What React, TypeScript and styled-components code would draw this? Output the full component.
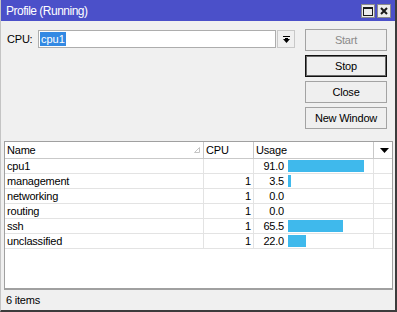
import styled, { createGlobalStyle } from 'styled-components';

const GlobalStyle = createGlobalStyle`
  html, body {
    margin: 0;
    padding: 0;
    background: #f0f0f0;
  }
  body {
    font-family: "Liberation Sans", Arial, sans-serif;
    font-size: 11px;
    color: #000;
  }
`;

const Window = styled.div`
  width: 397px;
  height: 312px;
  box-sizing: border-box;
  display: flex;
  flex-direction: column;
  background: #f0f0f0;
  border-left: 1px solid #c4c4c4;
  border-right: 2px solid #3c3c3c;
  border-bottom: 2px solid #3c3c3c;
`;

const TitleBar = styled.div`
  height: 21px;
  flex: none;
  display: flex;
  align-items: center;
  justify-content: space-between;
  padding: 0 4px 0 5px;
  background: #4b50c9;
  color: #fff;
  font-size: 12px;
  letter-spacing: -0.5px;
`;

const TitleButtons = styled.div`
  display: flex;
  gap: 2px;
  margin-top: 1px;
`;

const TitleButton = styled.div`
  width: 14px;
  height: 14px;
  box-sizing: border-box;
  display: flex;
  align-items: center;
  justify-content: center;
  background: #ececec;
  border: 1px solid #8c8c8c;
`;

const TopArea = styled.div`
  height: 120px;
  flex: none;
  display: flex;
  padding: 0 8px 0 6px;
`;

const CpuRow = styled.div`
  margin-top: 9px;
  height: 18px;
  display: flex;
  align-items: center;
`;

const CpuLabel = styled.span`
  width: 31px;
  letter-spacing: -0.2px;
`;

const CpuInput = styled.div`
  width: 238px;
  height: 18px;
  box-sizing: border-box;
  border: 1px solid #adadad;
  background: #fff;
  display: flex;
  align-items: center;
  padding-left: 1px;
`;

const Selected = styled.span`
  background: #3389e3;
  color: #fff;
  padding: 1px 1px;
`;

const DropButton = styled.div`
  width: 18px;
  height: 18px;
  margin-left: 1px;
  box-sizing: border-box;
  border: 1px solid #c8c8c8;
  background: #f0f0f0;
  display: flex;
  align-items: center;
  justify-content: center;
`;

const ButtonColumn = styled.div`
  margin-left: auto;
  margin-top: 8px;
  display: flex;
  flex-direction: column;
  gap: 4px;
`;

const Button = styled.div<{ $disabled?: boolean; $default?: boolean }>`
  width: 82px;
  height: 22px;
  box-sizing: border-box;
  display: flex;
  align-items: center;
  justify-content: center;
  background: #efefef;
  border: 1px solid ${p => (p.$default ? '#111' : '#a3a3a3')};
  box-shadow: ${p => (p.$default ? 'inset 0 0 0 1px #6a6a6a' : 'none')};
  color: ${p => (p.$disabled ? '#8a8a8a' : '#000')};
  letter-spacing: -0.2px;
`;

const ListFrame = styled.div`
  flex: 1;
  margin: 0 2px 0 3px;
  border: 1px solid #a0a0a0;
  border-bottom-width: 2px;
  background: #fff;
  display: flex;
  flex-direction: column;
`;

const Row = styled.div<{ $header?: boolean }>`
  display: grid;
  grid-template-columns: 199px 50px 120px 19px;
  height: ${p => (p.$header ? 17 : 15)}px;
  box-sizing: border-box;
  border-bottom: 1px solid ${p => (p.$header ? '#c9c9c9' : '#e3e3e3')};
`;

const HeadCell = styled.div<{ $last?: boolean }>`
  display: flex;
  align-items: center;
  padding-left: 2px;
  border-right: ${p => (p.$last ? 'none' : '1px solid #c9c9c9')};
  position: relative;
  letter-spacing: -0.2px;
  justify-content: ${p => (p.$last ? 'center' : 'flex-start')};
`;

const SortMark = styled.svg`
  position: absolute;
  right: 3px;
  top: 5px;
`;

const Cell = styled.div<{ $align?: 'left' | 'right'; $last?: boolean }>`
  display: flex;
  align-items: center;
  justify-content: ${p => (p.$align === 'right' ? 'flex-end' : 'flex-start')};
  padding: 0 ${p => (p.$align === 'right' ? 2 : 0)}px 0 ${p => (p.$align === 'right' ? 0 : 2)}px;
  border-right: ${p => (p.$last ? 'none' : '1px solid #e3e3e3')};
  letter-spacing: -0.2px;
  white-space: nowrap;
  overflow: hidden;
`;

const UsageValue = styled.span`
  width: 28px;
  text-align: right;
  flex: none;
`;

const Bar = styled.div`
  height: 12px;
  margin-left: 4px;
  background: #3fb9ec;
  flex: none;
`;

const StatusBar = styled.div`
  height: 20px;
  flex: none;
  display: flex;
  align-items: center;
  padding-left: 5px;
  letter-spacing: -0.2px;
`;

type Item = { name: string; cpu: string; usage: number };

const items: Item[] = [
  { name: 'cpu1', cpu: '', usage: 91.0 },
  { name: 'management', cpu: '1', usage: 3.5 },
  { name: 'networking', cpu: '1', usage: 0.0 },
  { name: 'routing', cpu: '1', usage: 0.0 },
  { name: 'ssh', cpu: '1', usage: 65.5 },
  { name: 'unclassified', cpu: '1', usage: 22.0 },
];

export default function App() {
  return (
    <>
      <GlobalStyle />
      <Window>
        <TitleBar>
          <span>Profile (Running)</span>
          <TitleButtons>
            <TitleButton>
              <svg width="10" height="9" viewBox="0 0 10 9">
                <rect x="0.5" y="0.5" width="9" height="8" fill="none" stroke="#1a1a1a" />
                <rect x="0" y="0" width="10" height="2" fill="#1a1a1a" />
              </svg>
            </TitleButton>
            <TitleButton>
              <svg width="8" height="8" viewBox="0 0 8 8">
                <path d="M1 1 L7 7 M7 1 L1 7" stroke="#1a1a1a" strokeWidth="2" />
              </svg>
            </TitleButton>
          </TitleButtons>
        </TitleBar>

        <TopArea>
          <CpuRow>
            <CpuLabel>CPU:</CpuLabel>
            <CpuInput>
              <Selected>cpu1</Selected>
            </CpuInput>
            <DropButton>
              <svg width="7" height="7" viewBox="0 0 7 7">
                <rect x="0" y="0" width="7" height="1" fill="#000" />
                <rect x="2" y="2" width="3" height="2" fill="#000" />
                <path d="M0 3 L7 3 L3.5 7 Z" fill="#000" />
              </svg>
            </DropButton>
          </CpuRow>
          <ButtonColumn>
            <Button $disabled>Start</Button>
            <Button $default>Stop</Button>
            <Button>Close</Button>
            <Button>New Window</Button>
          </ButtonColumn>
        </TopArea>

        <ListFrame>
          <Row $header>
            <HeadCell>
              Name
              <SortMark width="6" height="6" viewBox="0 0 6 6">
                <path d="M5.5 0.5 L5.5 5.5 L0.5 5.5 Z" fill="none" stroke="#c4c4c4" />
              </SortMark>
            </HeadCell>
            <HeadCell>CPU</HeadCell>
            <HeadCell>Usage</HeadCell>
            <HeadCell $last>
              <svg width="9" height="5" viewBox="0 0 9 5">
                <path d="M0 0 L9 0 L4.5 5 Z" fill="#000" />
              </svg>
            </HeadCell>
          </Row>
          {items.map(item => (
            <Row key={item.name}>
              <Cell>{item.name}</Cell>
              <Cell $align="right">{item.cpu}</Cell>
              <Cell>
                <UsageValue>{item.usage.toFixed(1)}</UsageValue>
                {item.usage > 0 && <Bar style={{ width: Math.max(2, Math.round(item.usage * 0.835)) }} />}
              </Cell>
              <Cell $last />
            </Row>
          ))}
        </ListFrame>

        <StatusBar>6 items</StatusBar>
      </Window>
    </>
  );
}
